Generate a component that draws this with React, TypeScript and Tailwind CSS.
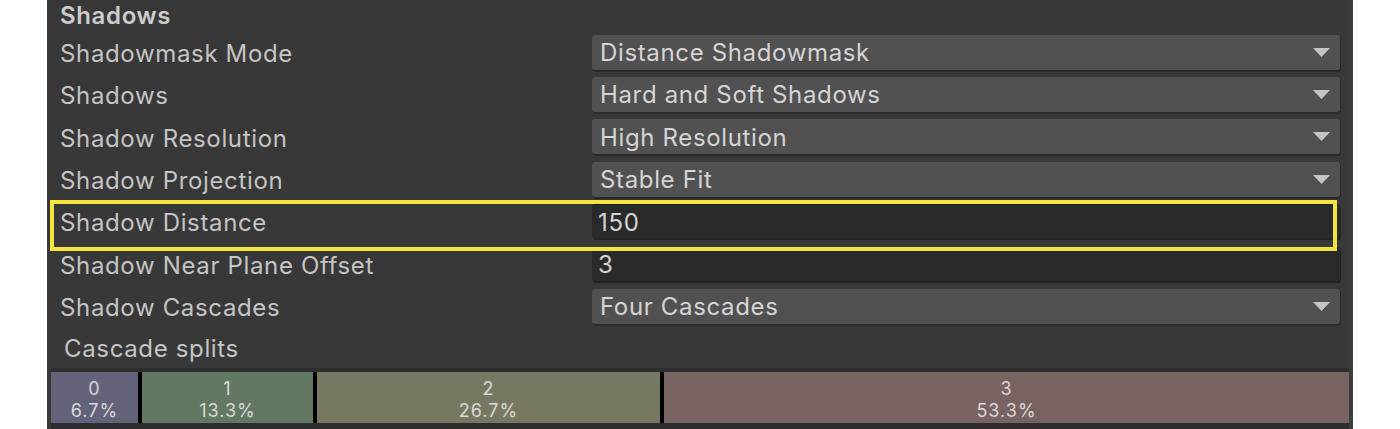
type Row = {
  label: string
  value: string
  kind: 'dropdown' | 'text'
  highlight?: boolean
}

const rows: Row[] = [
  { label: 'Shadowmask Mode', value: 'Distance Shadowmask', kind: 'dropdown' },
  { label: 'Shadows', value: 'Hard and Soft Shadows', kind: 'dropdown' },
  { label: 'Shadow Resolution', value: 'High Resolution', kind: 'dropdown' },
  { label: 'Shadow Projection', value: 'Stable Fit', kind: 'dropdown' },
  { label: 'Shadow Distance', value: '150', kind: 'text', highlight: true },
  { label: 'Shadow Near Plane Offset', value: '3', kind: 'text' },
  { label: 'Shadow Cascades', value: 'Four Cascades', kind: 'dropdown' },
]

const cascades = [
  { index: '0', pct: '6.7%', className: 'w-[87px] bg-[#62627a]' },
  { index: '1', pct: '13.3%', className: 'w-[171px] bg-[#627862]' },
  { index: '2', pct: '26.7%', className: 'w-[343px] bg-[#787862]' },
  { index: '3', pct: '53.3%', className: 'flex-1 bg-[#786262]' },
]

function DropArrow() {
  return (
    <svg width="17" height="9" viewBox="0 0 17 9" className="shrink-0">
      <polygon points="0,0 17,0 8.5,9" fill="#c4c4c4" />
    </svg>
  )
}

function Field({ row }: { row: Row }) {
  if (row.kind === 'dropdown') {
    return (
      <div className="flex h-[35px] w-[748px] items-center justify-between rounded-[3px] bg-[#515151] pl-[8px] pr-[10px] text-[#d4d4d4] shadow-[1px_2px_0_#2b2b2b]">
        <span className="pt-[2px]">{row.value}</span>
        <DropArrow />
      </div>
    )
  }
  return (
    <div className="flex h-[34px] w-[748px] items-center rounded-[3px] border-t border-[#1e1e1e] bg-[#2a2a2a] pl-[6px] pt-[2px] text-[#d4d4d4] shadow-[1px_2px_0_#242424]">
      {row.value}
    </div>
  )
}

export default function App() {
  return (
    <div className="flex h-[429px] w-[1400px] overflow-hidden bg-white font-['Inter','Noto_Sans',sans-serif] text-[24px] leading-none tracking-[0.65px]">
      <div className="ml-[47px] flex w-[1306px] bg-[#383838]">
        <div className="flex flex-1 flex-col">
          {/* Section header */}
          <div className="flex h-[31px] items-center pl-[13px] font-semibold text-[#cccccc]">Shadows</div>

          {rows.map((row) => (
            <div key={row.label} className="relative flex h-[42.33px] items-center">
              <div className="w-[545px] pl-[13px] pt-[4px] text-[#c4c4c4]">{row.label}</div>
              <Field row={row} />
              {row.highlight && (
                <div className="absolute top-0 left-[3px] right-[12px] z-10 h-[51px] border-4 border-[#f4e43c]" />
              )}
            </div>
          ))}

          {/* Cascade splits */}
          <div className="flex h-[41px] items-center pl-[17px] pt-[2px] text-[#c4c4c4]">Cascade splits</div>
          <div className="ml-[4px] flex flex-1 flex-col bg-[#2e2e2e] pt-[4px]">
            <div className="flex h-[51px] gap-[4px] overflow-hidden bg-black text-[18px] leading-none tracking-[1px] text-[#d8d8d8]">
              {cascades.map((c) => (
                <div key={c.index} className={`flex flex-col items-center pt-[8px] ${c.className}`}>
                  <span>{c.index}</span>
                  <span className="mt-[4px]">{c.pct}</span>
                </div>
              ))}
            </div>
          </div>
        </div>
        <div className="w-[4px] bg-[#3d3d3d]" />
      </div>
    </div>
  )
}
